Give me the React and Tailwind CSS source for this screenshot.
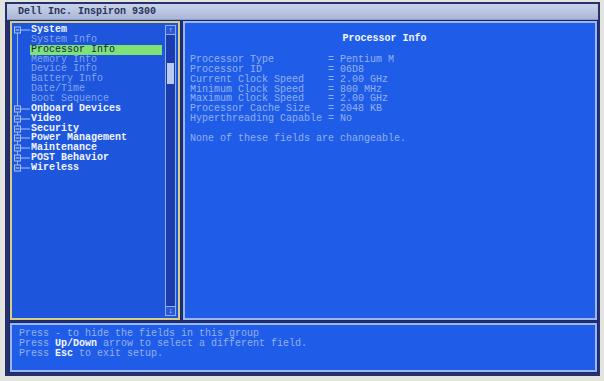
import React from "react";

const mono = { fontFamily: '"Liberation Mono", "DejaVu Sans Mono", monospace' };

const tree = [
  { t: "System", cat: true },
  { t: "System Info" },
  { t: "Processor Info", sel: true },
  { t: "Memory Info" },
  { t: "Device Info" },
  { t: "Battery Info" },
  { t: "Date/Time" },
  { t: "Boot Sequence" },
  { t: "Onboard Devices", cat: true },
  { t: "Video", cat: true },
  { t: "Security", cat: true },
  { t: "Power Management", cat: true },
  { t: "Maintenance", cat: true },
  { t: "POST Behavior", cat: true },
  { t: "Wireless", cat: true },
];

const fields = [
  ["Processor Type", "Pentium M"],
  ["Processor ID", "06D8"],
  ["Current Clock Speed", "2.00 GHz"],
  ["Minimum Clock Speed", "800 MHz"],
  ["Maximum Clock Speed", "2.00 GHz"],
  ["Processor Cache Size", "2048 KB"],
  ["Hyperthreading Capable", "No"],
];

function TreeGlyph({ cat, first, last }) {
  return (
    <svg width="19" height="10" viewBox="0 0 19 10" className="shrink-0">
      <line x1="5.5" y1={first ? 5 : 0} x2="5.5" y2={last ? 5 : 10} stroke="#8fb2f4" strokeWidth="1" />
      {cat && (
        <>
          <rect x="2.5" y="2" width="6" height="6" fill="#1d55dc" stroke="#a9c2f6" strokeWidth="1" />
          <line x1="3.5" y1="5" x2="7.5" y2="5" stroke="#cfdcfa" strokeWidth="1" />
          <line x1="8.5" y1="5" x2="18" y2="5" stroke="#a9c2f6" strokeWidth="1" />
        </>
      )}
    </svg>
  );
}

export default function App() {
  return (
    <div className="w-[604px] h-[381px] bg-[#e3e3e0] pt-[2px] pl-[5px] overflow-hidden" style={mono}>
      <div className="w-[595px] h-[374px] bg-[#26306c] pt-[2px] px-[2px] flex flex-col">
        <div className="h-[16px] bg-gradient-to-b from-[#c8d2ea] to-[#aab7d8] pl-[11px] flex items-center text-[10px] font-bold text-[#2b3358] whitespace-pre border-b border-[#8c9ac8]">
          Dell Inc. Inspiron 9300
        </div>
        <div className="flex gap-[3px] pl-[3px] pt-[1px]">
          {/* left panel */}
          <div className="w-[170px] h-[299px] border-2 border-[#d6cc84] bg-[#1d55dc] flex outline outline-1 outline-[#1a2a70]">
            <div className="flex-1 pt-[2px] text-[10px] leading-[9.86px] whitespace-pre">
              {tree.map((r, i) => (
                <div key={i} className="flex items-center h-[9.86px]">
                  <TreeGlyph cat={r.cat} first={i === 0} last={i === tree.length - 1} />
                  {r.sel ? (
                    <span className="-ml-[1px] pl-[1px] w-[132px] bg-[#7ee274] text-[#14224a]">{r.t}</span>
                  ) : r.cat ? (
                    <span className="font-bold text-[#f2f5ff]">{r.t}</span>
                  ) : (
                    <span className="text-[#86a4ec]">{r.t}</span>
                  )}
                </div>
              ))}
            </div>
            <div className="w-[11px] mr-[2px] mt-[2px] mb-[2px] border border-[#8db0f2] bg-[#1a3cae] flex flex-col">
              <div className="h-[9px] bg-[#2a58d8] border-b border-[#8db0f2] flex items-center justify-center text-[#dfe8ff] text-[7px] leading-none">↑</div>
              <div className="h-[28px]" />
              <div className="h-[21px] mx-[1px] bg-[#b8ccf4]" />
              <div className="flex-1" />
              <div className="h-[9px] bg-[#2a58d8] border-t border-[#8db0f2] flex items-center justify-center text-[#dfe8ff] text-[7px] leading-none">↓</div>
            </div>
          </div>
          {/* right panel */}
          <div className="w-[414px] h-[299px] border-2 border-[#9cb6f2] bg-[#1f5de8] outline outline-1 outline-[#1a2a70] pl-[5px] pt-[11px] text-[10px] leading-[9.86px] whitespace-pre">
            <div className="text-center pr-[16px] font-bold text-[#f4f7ff] h-[10px]">Processor Info</div>
            <div className="h-[11px]" />
            {fields.map(([k, v], i) => (
              <div key={i} className="flex h-[9.86px] text-[#94b0f2]">
                <span className="w-[138px]">{k}</span>
                <span className="w-[12px]">=</span>
                <span>{v}</span>
              </div>
            ))}
            <div className="h-[9.86px]" />
            <div className="h-[9.86px] text-[#94b0f2]">None of these fields are changeable.</div>
          </div>
        </div>
        <div className="mt-[3px] ml-[3px] w-[587px] h-[49px] border-2 border-[#9cb6f2] bg-[#1f5de8] outline outline-1 outline-[#1a2a70] pl-[7px] pt-[4px] text-[10px] leading-[9.86px] whitespace-pre text-[#94b0f2]">
          <div className="h-[9.86px]">Press - to hide the fields in this group</div>
          <div className="h-[9.86px]">Press <span className="font-bold text-[#f4f7ff]">Up/Down</span> arrow to select a different field.</div>
          <div className="h-[9.86px]">Press <span className="font-bold text-[#f4f7ff]">Esc</span> to exit setup.</div>
        </div>
      </div>
    </div>
  );
}
